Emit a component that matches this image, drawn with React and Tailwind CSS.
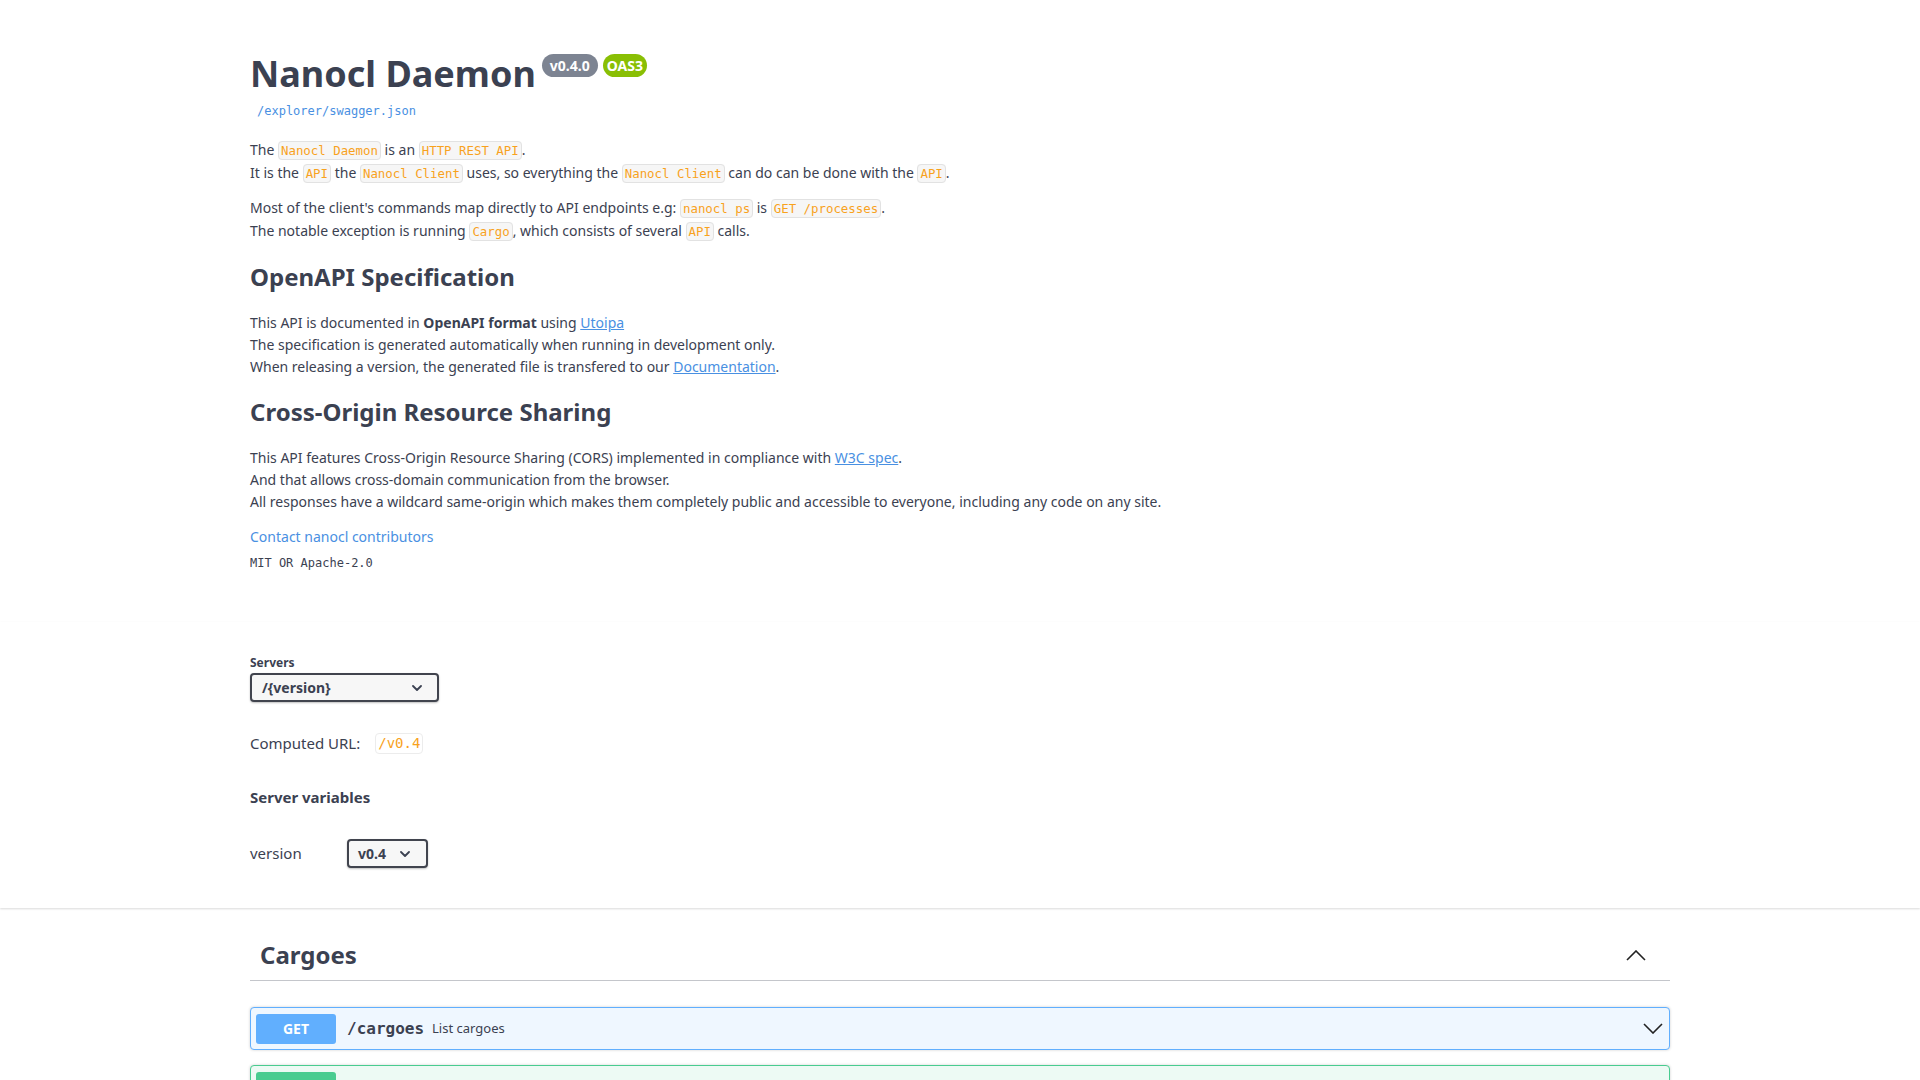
const Code = ({ children }) => (
  <code className="font-['DejaVu_Sans_Mono',monospace] text-[12.4px] text-[#f8a21d] bg-[#f6f6f6] border border-[#e2e2e2] rounded-[4px] px-[2px] py-[1px]">
    {children}
  </code>
);

const Link = ({ children, underline = true }) => (
  <a href="#" className={underline ? "text-[#4990e2] underline" : "text-[#4990e2]"}>
    {children}
  </a>
);

const SmallChevron = () => (
  <svg width="10" height="6" viewBox="0 0 10 6" fill="none">
    <path d="M1 1l4 4 4-4" stroke="#3b4151" strokeWidth="1.8" strokeLinecap="round" strokeLinejoin="round" />
  </svg>
);

const Chevron = ({ up }) => (
  <svg width="20" height="11" viewBox="0 0 20 11" fill="none">
    <path
      d={up ? "M1 10l9-9 9 9" : "M1 1l9 9 9-9"}
      stroke="#222"
      strokeWidth="1.6"
    />
  </svg>
);

const ops = [
  { method: "GET", path: "/cargoes", summary: "List cargoes", border: "border-[#61affe]", bg: "bg-[#eff7ff]", badge: "bg-[#61affe]" },
  { method: "POST", path: "/cargoes", summary: "Create a cargo", border: "border-[#49cc90]", bg: "bg-[#edfaf4]", badge: "bg-[#49cc90]" },
  { method: "DELETE", path: "/cargoes/{name}", summary: "Delete a cargo", border: "border-[#f93e3e]", bg: "bg-[#feebeb]", badge: "bg-[#f93e3e]" },
  { method: "GET", path: "/cargoes/{name}/inspect", summary: "Inspect a cargo", border: "border-[#61affe]", bg: "bg-[#eff7ff]", badge: "bg-[#61affe]" },
];

export default function App() {
  return (
    <div className="min-h-screen bg-white text-[#3b4151] font-['Noto_Sans',sans-serif]">
      <div className="max-w-[1460px] mx-auto px-5">
        <div className="pt-[51px] pb-[50px]">
          <div className="flex items-start">
            <h2 className="text-[36px] leading-[45px] font-bold text-[#3b4151]">Nanocl Daemon</h2>
            <span className="ml-[6px] mt-[3px] rounded-full bg-[#7d8492] px-[8px] text-[14px] leading-[23px] font-bold text-white">
              v0.4.0
            </span>
            <span className="ml-[5px] mt-[3px] rounded-full bg-[#89bf04] px-[4px] text-[14px] leading-[23px] font-bold text-white">
              OAS3
            </span>
          </div>
          <a href="#" className="block mt-[7px] ml-[7px] font-['DejaVu_Sans_Mono',monospace] text-[12px] leading-[16px] text-[#4990e2]">
            /explorer/swagger.json
          </a>

          <div className="mt-[20px] text-[14px] leading-[22px]">
            <p>
              The <Code>Nanocl Daemon</Code> is an <Code>HTTP REST API</Code>.
              <br />
              It is the <Code>API</Code> the <Code>Nanocl Client</Code> uses, so everything the <Code>Nanocl Client</Code> can do
              can be done with the <Code>API</Code>.
            </p>
            <p className="mt-[12px]">
              Most of the client's commands map directly to API endpoints e.g: <Code>nanocl ps</Code> is <Code>GET /processes</Code>.
              <br />
              The notable exception is running <Code>Cargo</Code>, which consists of several <Code>API</Code> calls.
            </p>

            <h2 className="mt-[19px] text-[24px] leading-[30px] font-bold">OpenAPI Specification</h2>
            <p className="mt-[20px]">
              This API is documented in <strong className="font-bold">OpenAPI format</strong> using <Link>Utoipa</Link>
              <br />
              The specification is generated automatically when running in development only.
              <br />
              When releasing a version, the generated file is transfered to our <Link>Documentation</Link>.
            </p>

            <h2 className="mt-[19px] text-[24px] leading-[30px] font-bold">Cross-Origin Resource Sharing</h2>
            <p className="mt-[20px]">
              This API features Cross-Origin Resource Sharing (CORS) implemented in compliance with <Link>W3C spec</Link>.
              <br />
              And that allows cross-domain communication from the browser.
              <br />
              All responses have a wildcard same-origin which makes them completely public and accessible to everyone, including
              any code on any site.
            </p>

            <div className="mt-[13px]">
              <Link underline={false}>Contact nanocl contributors</Link>
            </div>
            <div className="mt-[6px] font-['DejaVu_Sans_Mono',monospace] text-[12px] leading-[18px]">MIT OR Apache-2.0</div>
          </div>
        </div>
      </div>

      <div className="bg-white shadow-[0_1px_2px_0_rgba(0,0,0,0.15)] pt-[33px] pb-[40px]">
        <div className="max-w-[1460px] mx-auto px-5">
          <div className="text-[12px] leading-[15px] font-bold">Servers</div>
          <div className="mt-[3px] w-[189px] h-[29px] flex items-center justify-between pl-[10px] pr-[15px] border-2 border-[#41444e] rounded-[4px] bg-[#f7f7f7] shadow-[0_1px_2px_0_rgba(0,0,0,0.25)] text-[14px] font-bold">
            <span>/{"{version}"}</span>
            <SmallChevron />
          </div>

          <div className="mt-[30px] flex items-center text-[15px] leading-[22px]">
            <span>Computed URL:</span>
            <code className="ml-[15px] font-['DejaVu_Sans_Mono',monospace] text-[14px] leading-[15px] text-[#f8a21d] bg-white border border-[#ececec] rounded-[4px] px-[2px] py-[2px]">
              /v0.4
            </code>
          </div>

          <h4 className="mt-[32px] text-[15px] leading-[22px] font-bold">Server variables</h4>

          <div className="mt-[31px] flex items-center text-[15px]">
            <span className="w-[97px]">version</span>
            <div className="w-[81px] h-[29px] flex items-center justify-between pl-[9px] pr-[16px] border-2 border-[#41444e] rounded-[4px] bg-[#f7f7f7] shadow-[0_1px_2px_0_rgba(0,0,0,0.25)] text-[14px] font-bold">
              <span>v0.4</span>
              <SmallChevron />
            </div>
          </div>
        </div>
      </div>

      <div className="max-w-[1460px] mx-auto px-5 mt-[22px] pb-10">
        <div className="flex items-center justify-between py-[10px] pl-[10px] pr-[24px] border-b border-[#c4c6cb]">
          <h3 className="text-[24px] leading-[30px] font-bold">Cargoes</h3>
          <Chevron up />
        </div>

        <div className="mt-[26px] flex flex-col gap-[15px]">
          {ops.map((op, i) => (
            <div
              key={i}
              className={`flex items-center h-[43px] border ${op.border} ${op.bg} rounded-[4px] shadow-[0_0_3px_rgba(0,0,0,0.19)] pl-[5px] pr-[6px]`}
            >
              <span className={`w-[80px] h-[30px] flex items-center justify-center rounded-[3px] ${op.badge} text-white text-[14px] font-bold`}>
                {op.method}
              </span>
              <span className="pl-[11px] pr-[8px] font-['DejaVu_Sans_Mono',monospace] text-[16px] font-bold">{op.path}</span>
              <span className="text-[13px] flex-1">{op.summary}</span>
              <Chevron />
            </div>
          ))}
        </div>
      </div>
    </div>
  );
}
